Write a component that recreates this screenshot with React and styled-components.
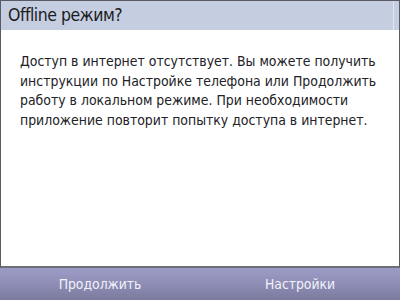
import React from 'react'
import styled, { createGlobalStyle } from 'styled-components'

const Global = createGlobalStyle`
  html, body { margin: 0; padding: 0; }
  body { width: 400px; height: 300px; overflow: hidden; background: #ffffff; }
`

function App() {
  return (
    <>
      <Global />
      <Screen>
        <Title>Offline режим?</Title>
        <Body>
          <p>
            Доступ в интернет отсутствует. Вы можете получить
            инструкции по Настройке телефона или Продолжить
            работу в локальном режиме. При необходимости
            приложение повторит попытку доступа в интернет.
          </p>
        </Body>
        <SoftKeys>
          <SoftKey>Продолжить</SoftKey>
          <SoftKey>Настройки</SoftKey>
        </SoftKeys>
      </Screen>
    </>
  )
}

const Screen = styled.div`
  width: 400px;
  height: 300px;
  display: flex;
  flex-direction: column;
  box-sizing: border-box;
  font-family: "DejaVu Sans Condensed", "DejaVu Sans", sans-serif;
`

const Title = styled.div`
  position: relative;
  height: 30px;
  box-sizing: border-box;
  background: #c5cde1;
  border: 1px solid #5a5a66;
  border-bottom: none;
  padding: 0 7px 2px;
  display: flex;
  align-items: center;
  font-size: 17.5px;
  letter-spacing: -0.5px;
  color: #1c1c22;
  &::after {
    content: "";
    position: absolute;
    top: 0;
    bottom: 0;
    right: 5px;
    width: 1px;
    background: #e2e6f1;
  }
`

const Body = styled.div`
  flex: 1;
  background: #ffffff;
  border-left: 1px solid #5a5a66;
  border-right: 1px solid #5a5a66;
  border-bottom: 2px solid #6e6e78;
  padding: 22px 19px;
  p {
    margin: 0;
    width: 372px;
    font-size: 13.9px;
    line-height: 19.6px;
    color: #222226;
  }
`

const SoftKeys = styled.div`
  height: 32px;
  background: linear-gradient(#9c9cc6, #8a8ab2 60%, #7a7a9c);
  display: grid;
  grid-template-columns: 1fr 1fr;
  align-items: center;
`

const SoftKey = styled.div`
  text-align: center;
  color: #f2f2fa;
  font-size: 13.8px;
  padding-bottom: 1px;
`

export default App
